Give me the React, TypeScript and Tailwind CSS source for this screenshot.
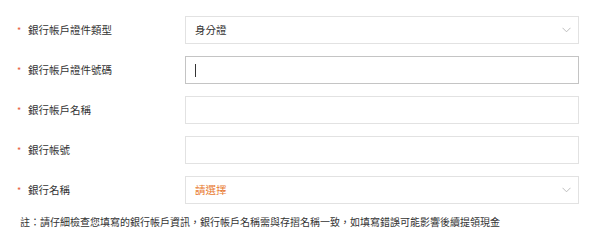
const FONT = '"Noto Sans CJK TC", "Liberation Sans", sans-serif'

type Field = {
  label: string
  kind: 'select' | 'input'
  value?: string
  placeholder?: boolean
  focused?: boolean
}

const FIELDS: Field[] = [
  { label: '銀行帳戶證件類型', kind: 'select', value: '身分證' },
  { label: '銀行帳戶證件號碼', kind: 'input', focused: true },
  { label: '銀行帳戶名稱', kind: 'input' },
  { label: '銀行帳號', kind: 'input' },
  { label: '銀行名稱', kind: 'select', value: '請選擇', placeholder: true },
]

function Chevron() {
  return (
    <svg width="9" height="6" viewBox="0 0 9 6" fill="none" className="shrink-0">
      <path d="M0.5 0.8 L4.5 4.8 L8.5 0.8" stroke="#b5b5b5" strokeWidth="0.9" />
    </svg>
  )
}

function Row({ field }: { field: Field }) {
  return (
    <div className="flex items-center h-[28px]">
      <div className="w-[168px] flex items-center text-[10.5px] text-[#333]">
        <span className="text-[#e8603c] text-[9px] leading-none w-[11px]">*</span>
        <span>{field.label}</span>
      </div>
      <div
        className={`w-[394px] h-[28px] flex items-center justify-between pl-[9px] pr-[7px] bg-white border ${
          field.focused ? 'border-[#c4c4c4]' : 'border-[#e2e2e2]'
        }`}
      >
        {field.kind === 'select' ? (
          <>
            <span
              className={`text-[10.5px] ${
                field.placeholder ? 'text-[#e87a30]' : 'text-[#333]'
              }`}
            >
              {field.value}
            </span>
            <Chevron />
          </>
        ) : field.focused ? (
          <span className="w-[1px] h-[13px] bg-[#333]" />
        ) : null}
      </div>
    </div>
  )
}

export default function App() {
  return (
    <div
      className="w-[600px] h-[250px] bg-white pl-[17px] pt-[16px]"
      style={{ fontFamily: FONT }}
    >
      <div className="flex flex-col gap-[12px]">
        {FIELDS.map((f) => (
          <Row key={f.label} field={f} />
        ))}
      </div>
      <p className="mt-[12px] ml-[3px] text-[10px] leading-[12px] text-[#333]">
        註：請仔細檢查您填寫的銀行帳戶資訊，銀行帳戶名稱需與存摺名稱一致，如填寫錯誤可能影響後續提領現金
      </p>
    </div>
  )
}
